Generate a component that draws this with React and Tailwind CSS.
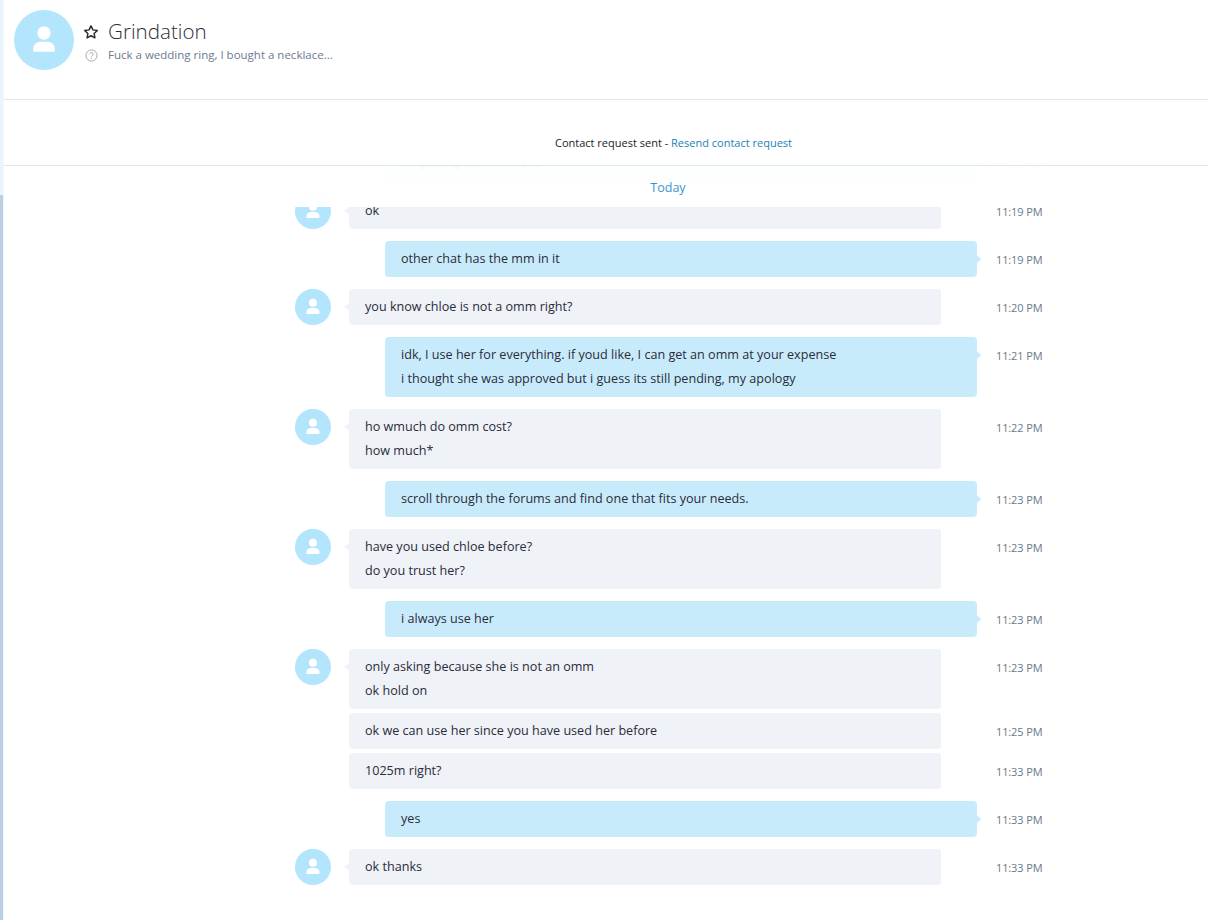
import React from "react";

function Person({ className }) {
  return (
    <svg viewBox="0 0 36 36" className={className}>
      <circle cx="18" cy="18" r="18" fill="#b3e5fc" />
      <circle cx="18" cy="13.8" r="4" fill="#fff" />
      <path d="M11.5 25v-1.8a4.2 4.2 0 0 1 4.2-4.2h4.6a4.2 4.2 0 0 1 4.2 4.2V25z" fill="#fff" />
    </svg>
  );
}

function TailLeft() {
  return (
    <svg viewBox="0 0 6 14" className="absolute left-[-5px] top-[11px] w-[6px] h-[14px]">
      <path d="M6 0C6 3 3 5 0.5 7C3 9 6 11 6 14z" fill="#eff2f7" />
    </svg>
  );
}

function TailRight() {
  return (
    <svg viewBox="0 0 6 14" className="absolute right-[-5px] top-[11px] w-[6px] h-[14px]">
      <path d="M0 0C0 3 3 5 5.5 7C3 9 0 11 0 14z" fill="#c8ebfc" />
    </svg>
  );
}

function Row({ me, lines, time, avatar, tight }) {
  return (
    <div className={`flex ${tight ? "mt-[4px]" : "mt-[12px]"}`}>
      <div className="w-[682px] shrink-0 flex">
        {me ? (
          <div className="relative ml-[90px] w-[592px] rounded-[4px] bg-[#c8ebfc] px-[16px] py-[6px]">
            {lines.map((l) => (
              <div key={l} className="h-[24px] leading-[24px] whitespace-nowrap">{l}</div>
            ))}
            <TailRight />
          </div>
        ) : (
          <>
            <div className="w-[54px] shrink-0">
              {avatar && <Person className="w-[36px] h-[36px]" />}
            </div>
            <div className="relative w-[592px] rounded-[4px] bg-[#eff2f7] px-[16px] py-[6px]">
              {lines.map((l) => (
                <div key={l} className="h-[24px] leading-[24px] whitespace-nowrap">{l}</div>
              ))}
              {avatar && <TailLeft />}
            </div>
          </>
        )}
      </div>
      <div className="ml-[19px] h-[36px] flex items-center text-[11px] text-[#6b7885] tracking-[-0.12px] whitespace-nowrap pt-[3px]">
        {time}
      </div>
    </div>
  );
}

const rows = [
  { me: true, lines: ["Im getting the mm here"], time: "11:19 PM" },
  { lines: ["ok"], time: "11:19 PM", avatar: true },
  { me: true, lines: ["other chat has the mm in it"], time: "11:19 PM" },
  { lines: ["you know chloe is not a omm right?"], time: "11:20 PM", avatar: true },
  { me: true, lines: ["idk, I use her for everything. if youd like, I can get an omm at your expense", "i thought she was approved but i guess its still pending, my apology"], time: "11:21 PM" },
  { lines: ["ho wmuch do omm cost?", "how much*"], time: "11:22 PM", avatar: true },
  { me: true, lines: ["scroll through the forums and find one that fits your needs."], time: "11:23 PM" },
  { lines: ["have you used chloe before?", "do you trust her?"], time: "11:23 PM", avatar: true },
  { me: true, lines: ["i always use her"], time: "11:23 PM" },
  { lines: ["only asking because she is not an omm", "ok hold on"], time: "11:23 PM", avatar: true },
  { lines: ["ok we can use her since you have used her before"], time: "11:25 PM", tight: true },
  { lines: ["1025m right?"], time: "11:33 PM", tight: true },
  { me: true, lines: ["yes"], time: "11:33 PM" },
  { lines: ["ok thanks"], time: "11:33 PM", avatar: true },
];

export default function App() {
  return (
    <div className="flex h-[920px] w-[1208px] overflow-hidden bg-white text-[#2b2b3a] font-['Open_Sans',sans-serif] text-[12.6px]">
      <div className="w-[3px] shrink-0 flex flex-col">
        <div className="h-[195px] bg-[#e8f5fc]" />
        <div className="flex-1 bg-[#b9cfe3]" />
      </div>
      <div className="w-px shrink-0 bg-[#f4f7fa]" />
      <div className="flex-1 min-w-0 flex flex-col">
        <header className="h-[100px] shrink-0 border-b border-[#dde6ee] flex pl-[10px] pt-[10px]">
          <Person className="w-[60px] h-[60px]" />
          <div className="ml-[10px] flex flex-col">
            <div className="flex items-center h-[27px] mt-[8px]">
              <svg viewBox="0 0 24 24" className="w-[16px] h-[16px] -ml-[1px]" fill="none" stroke="#2b2b2b" strokeWidth="2.2" strokeLinejoin="round">
                <path d="M12 2.8l2.9 6 6.6.9-4.8 4.6 1.2 6.5-5.9-3.2-5.9 3.2 1.2-6.5-4.8-4.6 6.6-.9z" />
              </svg>
              <span className="ml-[9px] text-[20.6px] font-light text-[#2f2f33] leading-[27px]">Grindation</span>
            </div>
            <div className="flex items-center h-[18px] mt-[1px]">
              <svg viewBox="0 0 14 14" className="w-[13px] h-[13px] ml-[1px]" fill="none" stroke="#a3a3a3" strokeWidth="1">
                <circle cx="7" cy="7" r="6" />
                <path d="M5.2 5.6a1.8 1.8 0 1 1 2.8 1.5c-.6.4-1 .7-1 1.4" />
                <path d="M7 9.6v1" />
              </svg>
              <span className="ml-[10px] text-[11.5px] text-[#6c7a92] leading-[18px]">Fuck a wedding ring, I bought a necklace...</span>
            </div>
          </div>
        </header>
        <div className="h-[66px] shrink-0 border-b border-[#dde6ee] flex justify-center items-end pb-[14px] text-[11px] leading-[16px] pl-[135px]">
          <span className="text-[#222]">Contact request sent - <span className="text-[#1b7fb5]">Resend contact request</span></span>
        </div>
        <div className="relative flex-1 min-h-0 overflow-hidden">
          <div className="h-full flex flex-col justify-end pb-[35px] pl-[291px]">
            {rows.map((r, i) => (
              <Row key={i} {...r} />
            ))}
          </div>
          <div className="absolute left-0 right-0 top-0 h-[41px] bg-white/96 flex justify-center pl-[124px] pt-[13px]">
            <span className="text-[12.5px] leading-[18px] text-[#3a96cf]">Today</span>
          </div>
        </div>
      </div>
    </div>
  );
}
